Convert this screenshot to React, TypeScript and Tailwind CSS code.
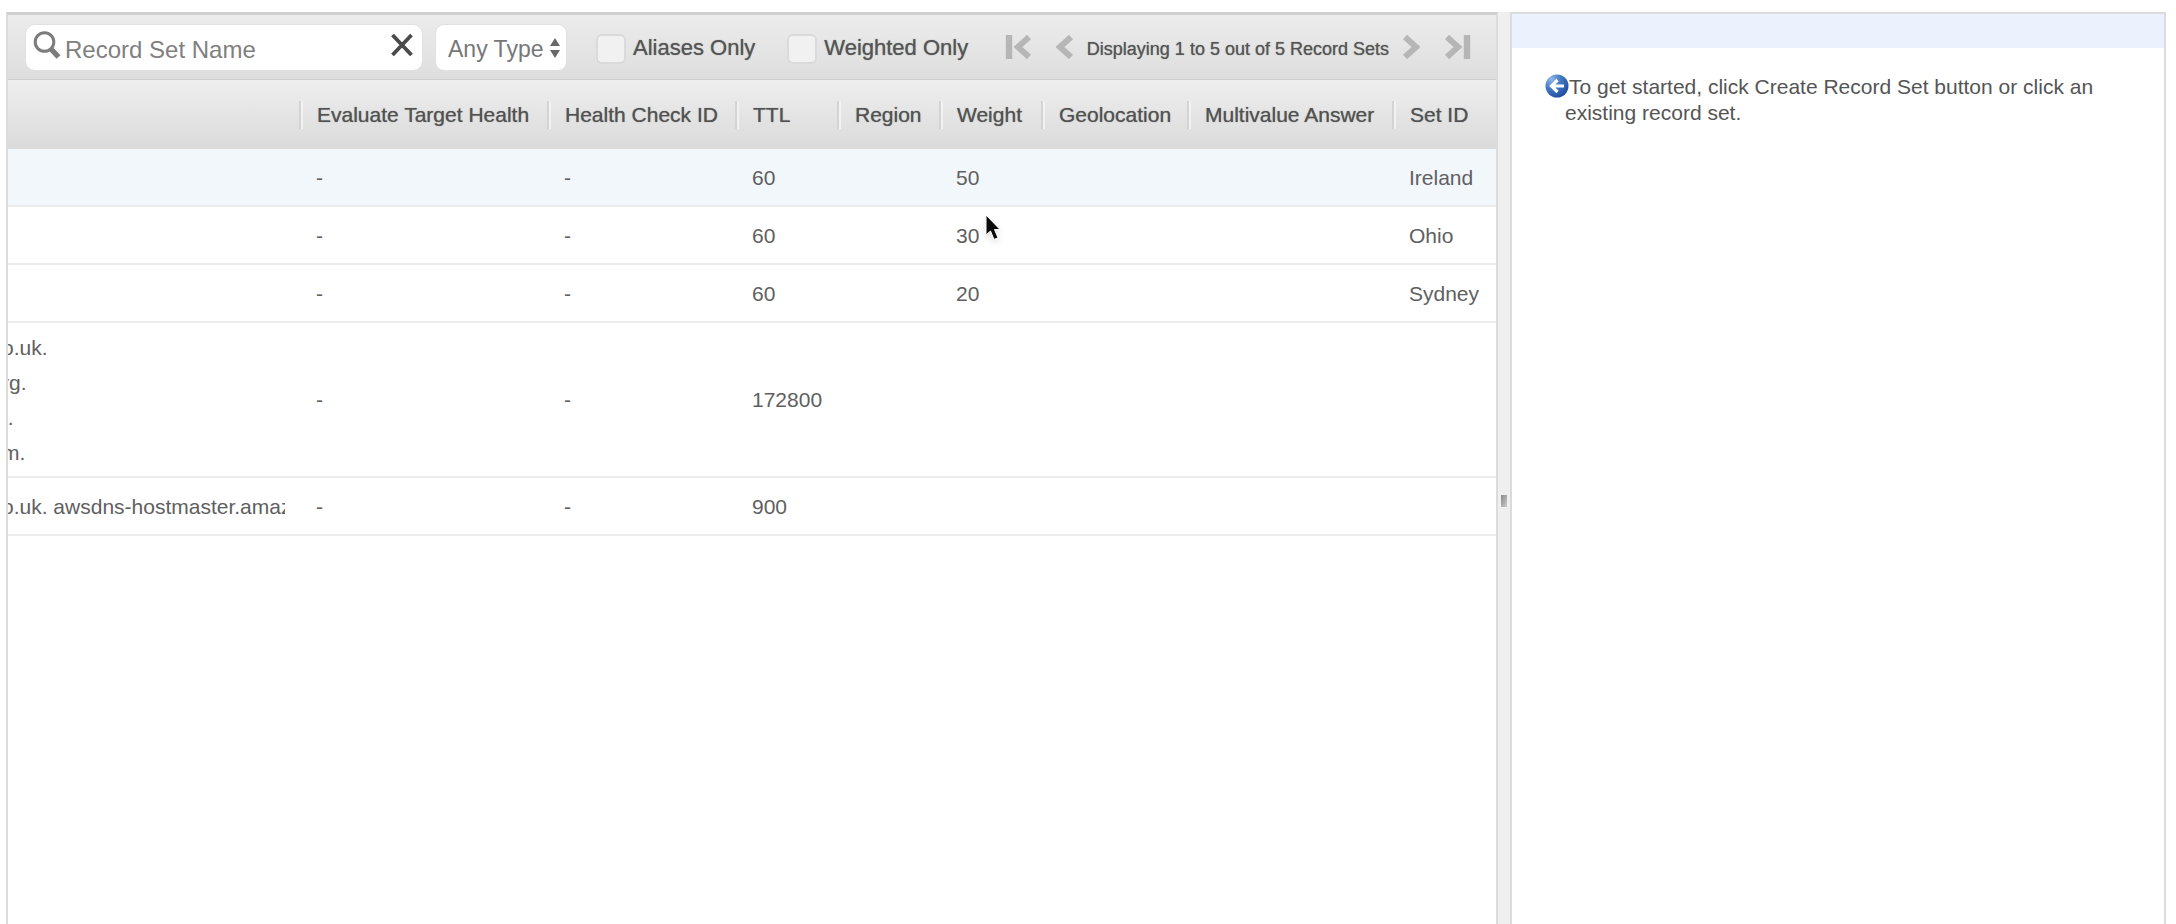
import React from "react";

type RecordSet = {
  value: string[];
  evaluate: string;
  healthCheck: string;
  ttl: string;
  weight: string;
  setId: string;
  selected?: boolean;
};

const columns = [
  { label: "Evaluate Target Health", width: "w-[248px]" },
  { label: "Health Check ID", width: "w-[188px]" },
  { label: "TTL", width: "w-[102px]" },
  { label: "Region", width: "w-[102px]" },
  { label: "Weight", width: "w-[102px]" },
  { label: "Geolocation", width: "w-[146px]" },
  { label: "Multivalue Answer", width: "w-[205px]" },
  { label: "Set ID", width: "w-[104px]" },
];

const records: RecordSet[] = [
  { value: [], evaluate: "-", healthCheck: "-", ttl: "60", weight: "50", setId: "Ireland", selected: true },
  { value: [], evaluate: "-", healthCheck: "-", ttl: "60", weight: "30", setId: "Ohio" },
  { value: [], evaluate: "-", healthCheck: "-", ttl: "60", weight: "20", setId: "Sydney" },
  { value: ["o.uk.", "rg.", "t.", "m."], evaluate: "-", healthCheck: "-", ttl: "172800", weight: "", setId: "" },
  { value: ["o.uk. awsdns-hostmaster.amaz"], evaluate: "-", healthCheck: "-", ttl: "900", weight: "", setId: "" },
];

function SearchIcon() {
  return (
    <svg aria-hidden="true" viewBox="0 0 28 30" className="mb-1 h-[30px] w-7 shrink-0" fill="none" stroke="#7c7c7c">
      <circle cx="11.5" cy="12" r="9.3" strokeWidth="3" />
      <path d="M18 19 L25.5 27" strokeWidth="5.4" />
    </svg>
  );
}

function CloseIcon() {
  return (
    <svg aria-hidden="true" viewBox="0 0 22 24" className="h-6 w-[22px]" fill="none" stroke="#4a4a4a" strokeWidth="3.8">
      <path d="M1.5 2 L20.5 22 M20.5 2 L1.5 22" />
    </svg>
  );
}

function PageIcon({ bar, flip }: { bar?: boolean; flip?: boolean }) {
  return (
    <svg
      aria-hidden="true"
      viewBox={bar ? "0 0 26 24" : "0 0 18 24"}
      className={`h-6 ${bar ? "w-[26px]" : "w-[18px]"} ${flip ? "rotate-180" : ""}`}
      fill="none"
      stroke="#b6b6b6"
    >
      {bar && <path d="M4 0 V24" strokeWidth="6.4" />}
      <path d={bar ? "M24 2 L13 12 L24 22" : "M15 2 L4 12 L15 22"} strokeWidth="6" />
    </svg>
  );
}

function BackBadge() {
  return (
    <svg aria-hidden="true" viewBox="0 0 24 24" className="inline-block h-6 w-6 align-[-4px]">
      <defs>
        <radialGradient id="badge" cx="0.25" cy="0.2" r="0.95">
          <stop offset="0" stopColor="#8db9e6" />
          <stop offset="0.45" stopColor="#4277c2" />
          <stop offset="1" stopColor="#1d469c" />
        </radialGradient>
      </defs>
      <circle cx="12" cy="12" r="11.5" fill="url(#badge)" />
      <path d="M19 12 H7 M12.5 6 L6.5 12 L12.5 18" fill="none" stroke="#fff" strokeWidth="3.2" />
    </svg>
  );
}

function Pointer() {
  return (
    <svg aria-hidden="true" viewBox="0 0 20 30" className="pointer-events-none absolute -top-1 left-7 h-[30px] w-5 drop-shadow-md">
      <path d="M2 1 V21 L6.5 17 L10 25.5 L14 23.8 L10.5 15.5 H16 Z" fill="#0a0a0a" stroke="#fff" strokeWidth="1" />
    </svg>
  );
}

function Check({ id, label }: { id: string; label: string }) {
  return (
    <div className="flex items-center gap-[7px]">
      <input
        id={id}
        type="checkbox"
        className="mt-1 size-[30px] appearance-none rounded-md border-2 border-[#dadada] bg-[#f1f1f1] checked:bg-[#a8c4ea]"
      />
      <label htmlFor={id} className="whitespace-nowrap pt-[2px] text-[22px] leading-7 text-[#555] [text-shadow:0_0_1px_#777]">
        {label}
      </label>
    </div>
  );
}

function Toolbar() {
  return (
    <div className="flex h-[65px] items-center border-b border-[#cfcfcf] bg-linear-to-b from-[#ececec] to-[#dedede] pl-[17px] pr-[25px]">
      <div className="flex h-[47px] w-[398px] shrink-0 items-center rounded-[10px] border border-[#e0e0e0] bg-white pl-[7px] pr-[9px]">
        <SearchIcon />
        <input
          type="text"
          aria-label="Record Set Name"
          placeholder="Record Set Name"
          className="min-w-0 flex-1 bg-transparent pl-1 pt-[6px] text-[24px] leading-8 text-[#555] outline-none placeholder:text-[#808080]"
        />
        <button type="button" aria-label="Clear search" className="mb-1 shrink-0">
          <CloseIcon />
        </button>
      </div>
      <div className="relative ml-3 h-[47px] w-[132px] shrink-0">
        <select
          aria-label="Record type"
          className="h-full w-full appearance-none rounded-[9px] border border-[#e0e0e0] bg-white pl-3 pt-1 text-[23px] text-[#777] outline-none"
        >
          <option>Any Type</option>
        </select>
        <svg aria-hidden="true" viewBox="0 0 10 20" className="pointer-events-none absolute right-[7px] top-[14px] h-5 w-[10px]" fill="#686868">
          <path d="M5 0 L10 8 H0 Z M0 12 H10 L5 20 Z" />
        </svg>
      </div>
      <div className="ml-[29px] flex gap-8">
        <Check id="aliases" label="Aliases Only" />
        <Check id="weighted" label="Weighted Only" />
      </div>
      <nav aria-label="Pages" className="ml-auto flex items-center gap-[25px]">
        <button type="button" aria-label="First page"><PageIcon bar /></button>
        <button type="button" aria-label="Previous page"><PageIcon /></button>
        <span className="-mx-3 whitespace-nowrap pt-1 text-[18px] leading-6 text-[#555] [text-shadow:0_0_1px_#777]">
          Displaying 1 to 5 out of 5 Record Sets
        </span>
        <button type="button" aria-label="Next page"><PageIcon flip /></button>
        <button type="button" aria-label="Last page"><PageIcon bar flip /></button>
      </nav>
    </div>
  );
}

function RecordTable() {
  return (
    <table className="w-full table-fixed border-separate border-spacing-0 text-left text-[21px] leading-[35px] text-[#606060]">
      <thead>
        <tr className="h-[69px] bg-linear-to-b from-[#eeeeee] to-[#dbdbdb]">
          <th aria-label="Value" className="p-0" />
          {columns.map((c) => (
            <th key={c.label} scope="col" className={`${c.width} p-0 font-normal`}>
              <div className="flex h-7 items-center whitespace-nowrap border-l-2 border-[#d4d4d4] pl-4 text-[#525252] shadow-[inset_2px_0_0_#f2f2f2] [text-shadow:0_0_1px_#777]">
                {c.label}
              </div>
            </th>
          ))}
        </tr>
      </thead>
      <tbody className="[&_td]:border-b-2 [&_td]:border-[#ececec] [&_td]:p-0 [&_td+td]:pl-[17px]">
        {records.map((r, i) => (
          <tr key={i} className={r.value.length > 1 ? "h-[155px]" : r.selected ? "h-[58px] bg-[#f2f7fc]" : "h-[58px]"}>
            <td>
              <div className="mr-[14px] overflow-hidden whitespace-nowrap">
                {r.value.map((line) => (
                  <div key={line} className="-ml-[6px]">{line}</div>
                ))}
              </div>
            </td>
            <td>{r.evaluate}</td>
            <td>{r.healthCheck}</td>
            <td>{r.ttl}</td>
            <td />
            <td>
              <div className="relative">
                {r.weight}
                {r.weight === "30" && <Pointer />}
              </div>
            </td>
            <td />
            <td />
            <td>{r.setId}</td>
          </tr>
        ))}
      </tbody>
    </table>
  );
}

export default function App() {
  return (
    <div className="flex min-h-screen bg-white pl-[6px] pr-[10px] pt-3 font-['Liberation_Sans',Arial,sans-serif]">
      <main className="min-w-0 flex-1 border-x-2 border-t-[3px] border-[#dcdcdc] border-t-[#cfcfcf]">
        <Toolbar />
        <RecordTable />
      </main>
      <div role="separator" aria-orientation="vertical" className="flex w-3 justify-center bg-[#efefef] pt-[483px]">
        <div className="h-3 w-[6px] bg-linear-to-br from-[#8a8a8a] to-[#cccccc]" />
      </div>
      <aside className="w-[656px] shrink-0 border-x-2 border-t-2 border-[#dcdcdc]">
        <div className="h-[34px] bg-[#ebf2fd]" />
        <p className="pl-[53px] pr-12 pt-[26px] text-[21px] leading-[26px] text-[#555] -indent-5">
          <BackBadge />
          To get started, click Create Record Set button or click an existing record set.
        </p>
      </aside>
    </div>
  );
}
